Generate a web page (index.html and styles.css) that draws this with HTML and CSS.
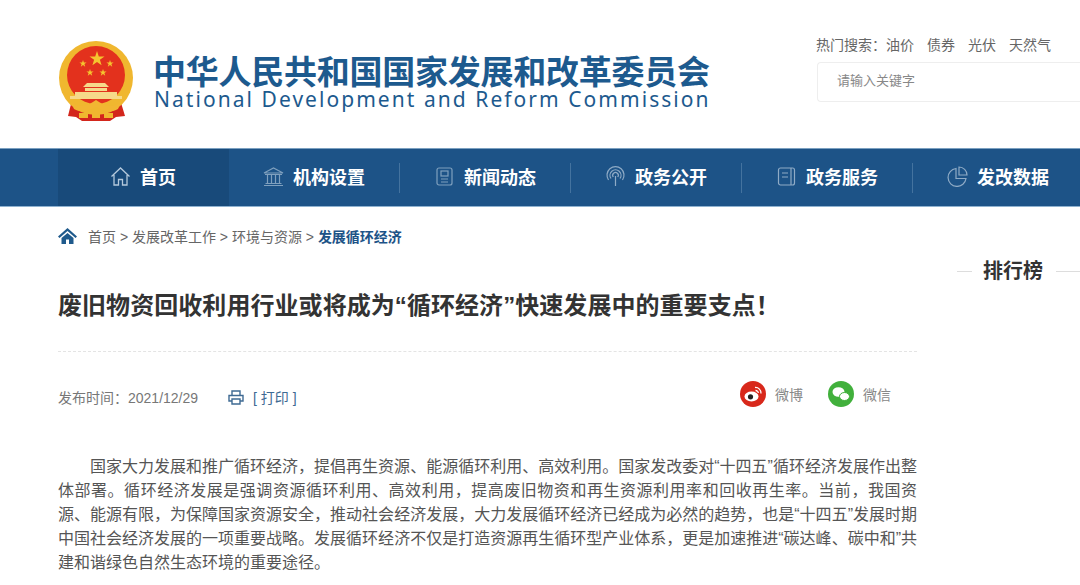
FILE: index.html
```html
<!DOCTYPE html>
<html lang="zh-CN">
<head>
    <meta charset="UTF-8">
    <title>废旧物资回收利用行业或将成为“循环经济”快速发展中的重要支点！</title>
    <link rel="stylesheet" href="styles.css">
</head>
<body>
    <header class="header">
        <div class="logo">
            <svg class="emblem" width="76" height="82" viewBox="0 0 76 82">
                <path d="M15 56 L10 76 L18 77 L24 81 L52 81 L58 77 L67 76 L61 56 Z" fill="#d3261c"/>
                <circle cx="38" cy="38" r="37" fill="#f0b72f"/>
                <circle cx="38" cy="35" r="29" fill="#e3311d"/>
                <path d="M39 11l1.800 5.400h5.700l-4.600 3.400 1.700 5.500-4.600-3.400-4.600 3.400 1.700-5.500-4.600-3.400h5.700z" fill="#f5c52f"/>
                <path d="M25 20l.9 2.500h2.700l-2.200 1.600.8 2.600-2.200-1.600-2.200 1.600.8-2.600-2.200-1.600h2.700z" fill="#f5c52f"/>
                <path d="M52 20l.9 2.500h2.700l-2.200 1.600.8 2.600-2.200-1.600-2.200 1.600.8-2.600-2.200-1.600h2.700z" fill="#f5c52f"/>
                <path d="M32 29l.9 2.500h2.700l-2.200 1.600.8 2.600-2.200-1.600-2.200 1.600.8-2.600-2.200-1.600h2.700z" fill="#f5c52f"/>
                <path d="M45 29l.9 2.500h2.700l-2.200 1.600.8 2.600-2.200-1.600-2.200 1.600.8-2.600-2.200-1.600h2.700z" fill="#f5c52f"/>
                <path d="M29 43h18l4 4H25zM27 48h22v3H27zM17 52h42v4H17zM12 56h52v3H12z" fill="#f6d98a"/>
                <path d="M12 60 C20 70 30 66 38 60 C46 66 56 70 64 60 L60 69 C52 74 44 70 38 67 C32 70 24 74 16 69 Z" fill="#f2b632"/>
                <path d="M21 73h9v5h-9zM34 72h8v6h-8zM46 73h9v5h-9z" fill="#f0b72f"/>
            </svg>
            <div class="logo-text">
                <div class="logo-cn">中华人民共和国国家发展和改革委员会</div>
                <div class="logo-en">National Development and Reform Commission</div>
            </div>
        </div>
        <div class="search">
            <div class="hot">
                <span>热门搜索：油价</span>
                <span>债券</span>
                <span>光伏</span>
                <span>天然气</span>
            </div>
            <div class="search-box">请输入关键字</div>
        </div>
    </header>

    <nav class="nav">
        <a class="nav-item active">
            <svg width="21" height="21" viewBox="0 0 21 21" fill="none" stroke="#b4c9dc" stroke-width="1.300">
                <path d="M1.500 10.500 L10.500 2 L19.500 10.500 M4 9 V19 H8.500 V13.500 H12.500 V19 H17 V9"/>
            </svg>
            首页
        </a>
        <a class="nav-item">
            <svg width="21" height="21" viewBox="0 0 21 21" fill="none" stroke="#7fa0be" stroke-width="1.200">
                <path d="M1 7 L10.500 2 L20 7 Z M2 8.500 H19 M4.500 9 V17 M8.500 9 V17 M12.500 9 V17 M16.500 9 V17 M2.500 17.500 H18.500 M1 19.500 H20"/>
            </svg>
            机构设置
        </a>
        <a class="nav-item">
            <svg width="21" height="21" viewBox="0 0 21 21" fill="none" stroke="#7fa0be" stroke-width="1.200">
                <rect x="3" y="2" width="15" height="17" rx="2"/>
                <rect x="7" y="5" width="7" height="5"/>
                <path d="M7 13 H14 M7 16 H14"/>
            </svg>
            新闻动态
        </a>
        <a class="nav-item">
            <svg width="21" height="21" viewBox="0 0 21 21" fill="none" stroke="#8fabc6" stroke-width="1.200">
                <path d="M3.500 14 A8.500 8.500 0 1 1 17.500 14 M6 12.500 A5.500 5.500 0 1 1 15 12.500 M8.300 11 A2.800 2.800 0 1 1 12.700 11 M10.500 10 V20"/>
            </svg>
            政务公开
        </a>
        <a class="nav-item">
            <svg width="21" height="21" viewBox="0 0 21 21" fill="none" stroke="#8fabc6" stroke-width="1.200">
                <rect x="2.500" y="2" width="16" height="17" rx="2"/>
                <path d="M6 7 H12 M6 11 H12 M15 2 V19"/>
            </svg>
            政务服务
        </a>
        <a class="nav-item">
            <svg width="21" height="21" viewBox="0 0 21 21" fill="none" stroke="#8fabc6" stroke-width="1.200">
                <path d="M9 2.500 A9 9 0 1 0 19 12.500 H9 Z"/>
                <path d="M12 1 A8 8 0 0 1 20 9 H12 Z"/>
            </svg>
            发改数据
        </a>
    </nav>

    <div class="main">
        <div class="article">
            <div class="crumb">
                <svg width="19" height="16" viewBox="0 0 19 16">
                    <path d="M9.500 0 L19 8.500 L17.500 10 L9.500 3 L1.500 10 L0 8.500 Z M3.500 10 L9.500 5 L15.500 10 V16 H11 V11.500 H8 V16 H3.500 Z" fill="#1f5a8c"/>
                </svg>
                <span class="crumb-links">首页 &gt; 发展改革工作 &gt; 环境与资源 &gt; <b>发展循环经济</b></span>
            </div>
            <h1 class="title">废旧物资回收利用行业或将成为“循环经济”快速发展中的重要支点！</h1>
            <div class="meta">
                <span class="date">发布时间：2021/12/29</span>
                <span class="print">
                    <svg width="16" height="15" viewBox="0 0 16 15" fill="none" stroke="#3e6a93" stroke-width="1.400">
                        <path d="M4 5 V1 H12 V5 M3.500 11 H1 V5.500 H15 V11 H12.500 M4 9 H12 V14 H4 Z"/>
                    </svg>
                    [ 打印 ]
                </span>
                <span class="share">
                    <span class="share-item">
                        <svg width="26" height="26" viewBox="0 0 26 26">
                            <circle cx="13" cy="13" r="13" fill="#d8281b"/>
                            <ellipse cx="11.500" cy="15.500" rx="7" ry="5" fill="#fff"/>
                            <circle cx="10.500" cy="15.800" r="2.600" fill="#222"/>
                            <path d="M15 6.500 A5.500 5.500 0 0 1 21 12.500 M15.500 9.500 A2.600 2.600 0 0 1 18.300 12" fill="none" stroke="#fff" stroke-width="1.300"/>
                        </svg>
                        微博
                    </span>
                    <span class="share-item">
                        <svg width="26" height="26" viewBox="0 0 26 26">
                            <circle cx="13" cy="13" r="13" fill="#41b03c"/>
                            <ellipse cx="10.500" cy="11" rx="6" ry="4.800" fill="#fff"/>
                            <ellipse cx="16.500" cy="15.500" rx="5" ry="4" fill="#fff" stroke="#41b03c"/>
                        </svg>
                        微信
                    </span>
                </span>
            </div>
            <p class="content">国家大力发展和推广循环经济，提倡再生资源、能源循环利用、高效利用。国家发改委对“十四五”循环经济发展作出整体部署。循环经济发展是强调资源循环利用、高效利用，提高废旧物资和再生资源利用率和回收再生率。当前，我国资源、能源有限，为保障国家资源安全，推动社会经济发展，大力发展循环经济已经成为必然的趋势，也是“十四五”发展时期中国社会经济发展的一项重要战略。发展循环经济不仅是打造资源再生循环型产业体系，更是加速推进“碳达峰、碳中和”共建和谐绿色自然生态环境的重要途径。</p>
        </div>
        <aside class="side">
            <div class="side-title"><span>排行榜</span></div>
        </aside>
    </div>
</body>
</html>
```

FILE: styles.css
```css
body {
    font-family: "Liberation Sans", "Noto Sans CJK SC", sans-serif;
    background-color: #fff;
    color: #555;
    margin: 0;
    padding: 0;
    width: 1080px;
    height: 585px;
    overflow: hidden;
}

.header {
    height: 148px;
    display: flex;
    justify-content: space-between;
    padding-left: 58px;
    box-sizing: border-box;
}

.logo {
    display: flex;
    align-items: flex-start;
    padding-top: 40px;
}

.emblem {
    flex-shrink: 0;
}

.logo-text {
    margin-left: 19px;
    margin-top: 17px;
    color: #1d5a8e;
}

.logo-cn {
    font-size: 33px;
    line-height: 32px;
    letter-spacing: -0.25px;
    font-weight: bold;
    white-space: nowrap;
}

.logo-en {
    font-family: "Noto Sans", sans-serif;
    font-size: 21px;
    line-height: 20px;
    letter-spacing: 2.05px;
    margin-left: 1px;
    white-space: nowrap;
}

.search {
    width: 264px;
    padding-top: 36px;
    flex-shrink: 0;
}

.hot {
    display: flex;
    gap: 13px;
    font-size: 14px;
    line-height: 18px;
    color: #666;
    white-space: nowrap;
}

.search-box {
    margin-top: 8px;
    margin-left: 1px;
    height: 38px;
    line-height: 36px;
    padding-left: 19px;
    border: 1px solid #eee;
    border-right: none;
    border-radius: 4px 0 0 4px;
    font-size: 13px;
    color: #888;
}

.nav {
    height: 59px;
    box-sizing: border-box;
    padding-left: 58px;
    display: flex;
    background-color: #1d5387;
    border-top: 1px solid #7ba0c0;
    border-bottom: 1px solid #8fb2d0;
}

.nav-item {
    width: 171px;
    flex-shrink: 0;
    display: flex;
    align-items: center;
    justify-content: center;
    gap: 9px;
    padding-right: 1px;
    padding-bottom: 3px;
    box-sizing: border-box;
    font-size: 18px;
    font-weight: bold;
    color: #fff;
    position: relative;
}

/* short divider between the tabs */
.nav-item + .nav-item + .nav-item::before {
    content: "";
    position: absolute;
    left: -1px;
    top: 14px;
    height: 30px;
    width: 1px;
    background-color: #44739f;
}

.active {
    background-color: #184a7a;
}

.main {
    display: flex;
    padding-left: 58px;
}

.article {
    width: 859px;
    flex-shrink: 0;
}

.crumb {
    display: flex;
    align-items: center;
    gap: 11px;
    height: 58px;
    font-size: 14px;
    color: #666;
    white-space: nowrap;
}

.crumb-links b {
    color: #1d5387;
}

.title {
    margin: 0;
    padding-top: 11px;
    height: 75px;
    border-bottom: 1px dashed #e4e4e4;
    font-size: 24px;
    line-height: 60px;
    letter-spacing: 0.06px;
    color: #333;
    white-space: nowrap;
}

.meta {
    display: flex;
    align-items: center;
    height: 88px;
    font-size: 14px;
    color: #777;
    margin-top: 1px;
}

.print {
    display: flex;
    align-items: center;
    gap: 9px;
    margin-left: 30px;
    color: #3e6a93;
}

.share {
    display: flex;
    gap: 25px;
    margin-left: auto;
    margin-right: 26px;
    margin-bottom: 6px;
}

.share-item {
    display: flex;
    align-items: center;
    gap: 9px;
    font-size: 14px;
    color: #888;
}

.content {
    margin: 0;
    padding-top: 14px;
    font-size: 16px;
    line-height: 24px;
    text-indent: 2em;
    text-align: justify;
    color: #555;
}

.side {
    margin-left: 40px;
    width: 123px;
    flex-shrink: 0;
}

.side-title {
    margin-top: 50px;
    display: flex;
    align-items: center;
    font-size: 20px;
    font-weight: bold;
    line-height: 28px;
    color: #333;
}

.side-title::before,
.side-title::after {
    content: "";
    height: 1px;
    background-color: #ddd;
}

.side-title::before {
    width: 15px;
    margin-right: 11px;
}

.side-title::after {
    flex: 1;
    margin-left: 13px;
}
```
